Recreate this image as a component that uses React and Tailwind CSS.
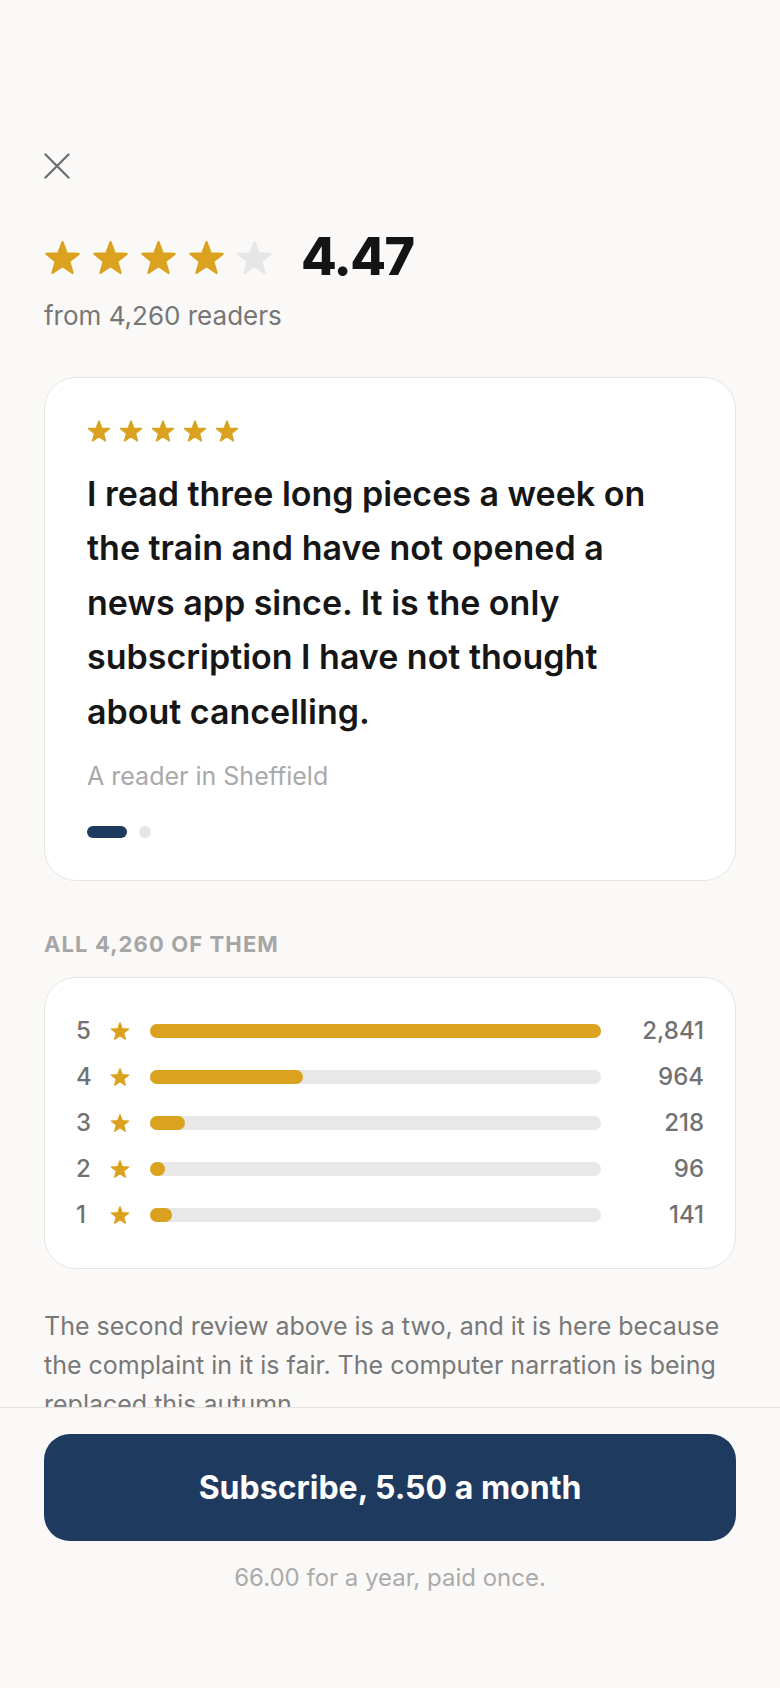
import React from 'react';

const GOLD = '#DAA21F';

function Star({ className, color = GOLD }) {
    return (
        <svg viewBox="0 0 24 24" className={className} aria-hidden="true">
            <polygon
                points="12,2 14.7,9.28 22.46,9.6 16.37,14.42 18.47,21.9 12,17.6 5.53,21.9 7.63,14.42 1.54,9.6 9.3,9.28"
                fill={color}
                stroke={color}
                strokeWidth="1.5"
                strokeLinejoin="round"
            />
        </svg>
    );
}

const breakdown = [
    { stars: 5, count: 2841 },
    { stars: 4, count: 964 },
    { stars: 3, count: 218 },
    { stars: 2, count: 96 },
    { stars: 1, count: 141 },
];

export default function App() {
    const max = Math.max(...breakdown.map(r => r.count));

    return (
        <div className="min-h-screen bg-[#faf9f7] font-['Inter',sans-serif] text-[#161616]">
            <div className="px-[44px] pt-[153px] pb-[300px]">
                {/* close */}
                <button type="button" aria-label="Close" className="block text-[#6e6e6e]">
                    <svg viewBox="0 0 26 26" className="w-[26px] h-[26px]" fill="none" stroke="currentColor" strokeWidth="2.3" strokeLinecap="round">
                        <path d="M1.5 1.5 24.5 24.5M24.5 1.5 1.5 24.5" />
                    </svg>
                </button>

                {/* overall rating */}
                <div className="mt-[51px] flex items-center">
                    <div className="flex items-center gap-[11px]">
                        {[0, 1, 2, 3].map(i => (
                            <Star key={i} className="w-[37px] h-[37px]" />
                        ))}
                        <Star className="w-[37px] h-[37px]" color="#e6e6e6" />
                    </div>
                    <span className="ml-[28px] text-[52px] leading-[54px] font-extrabold tracking-[-0.03em] text-[#141414]">4.47</span>
                </div>
                <p className="mt-[12px] text-[26px] leading-[39px] text-[#767676]">from 4,260 readers</p>

                {/* featured review */}
                <div className="mt-[42px] bg-white border border-[#e7e5e2] rounded-[32px] pt-[41px] px-[42px] pb-[42px]">
                    <div className="flex gap-2">
                        {[0, 1, 2, 3, 4].map(i => (
                            <Star key={i} className="w-6 h-6" />
                        ))}
                    </div>
                    <p className="mt-6 text-[34px] leading-[1.6] font-semibold text-[#161616]">
                        I read three long pieces a week on the train and have not opened a news app since. It is the only subscription I have not thought about cancelling.
                    </p>
                    <p className="mt-[18px] text-[25px] leading-[39px] text-[#a9a9a9]">A reader in Sheffield</p>
                    <div className="mt-[30px] flex items-center gap-3">
                        <span className="block w-10 h-3 rounded-full bg-[#1f3a5f]" />
                        <span className="block w-3 h-3 rounded-full bg-[#e6e6e6]" />
                    </div>
                </div>

                {/* breakdown */}
                <h3 className="mt-[47px] text-[22px] leading-[33px] font-bold uppercase tracking-[0.05em] text-[#a6a6a6]">All 4,260 of them</h3>
                <div className="mt-4 bg-white border border-[#e7e5e2] rounded-[32px] px-[31px] py-[39px] flex flex-col gap-[18px]">
                    {breakdown.map(row => (
                        <div key={row.stars} className="flex items-center h-7">
                            <span className="w-[14px] text-[24px] font-medium text-[#717171]">{row.stars}</span>
                            <Star className="ml-5 w-5 h-5" />
                            <div className="ml-5 flex-1 h-[14px] rounded-full bg-[#e8e8e8]">
                                <div className="h-full rounded-full bg-[#DAA21F]" style={{ width: `${(row.count / max) * 100}%` }} />
                            </div>
                            <span className="w-[103px] text-right text-[24px] font-medium text-[#717171]">{row.count.toLocaleString('en-GB')}</span>
                        </div>
                    ))}
                </div>

                <p className="mt-[38px] text-[25px] leading-[39px] text-[#787878]">
                    The second review above is a two, and it is here because the complaint in it is fair. The computer narration is being replaced this autumn.
                </p>
            </div>

            {/* sticky purchase bar */}
            <div className="fixed bottom-0 left-0 right-0 bg-[#faf9f7] border-t border-[#e4e2df] px-[44px] pt-[26px] pb-[92px]">
                <button type="button" className="w-full h-[107px] rounded-[26px] bg-[#1f3a5f] text-white text-[32px] font-bold">
                    Subscribe, 5.50 a month
                </button>
                <p className="mt-[19px] text-center text-[24px] leading-[36px] text-[#ababab]">66.00 for a year, paid once.</p>
            </div>
        </div>
    );
}
